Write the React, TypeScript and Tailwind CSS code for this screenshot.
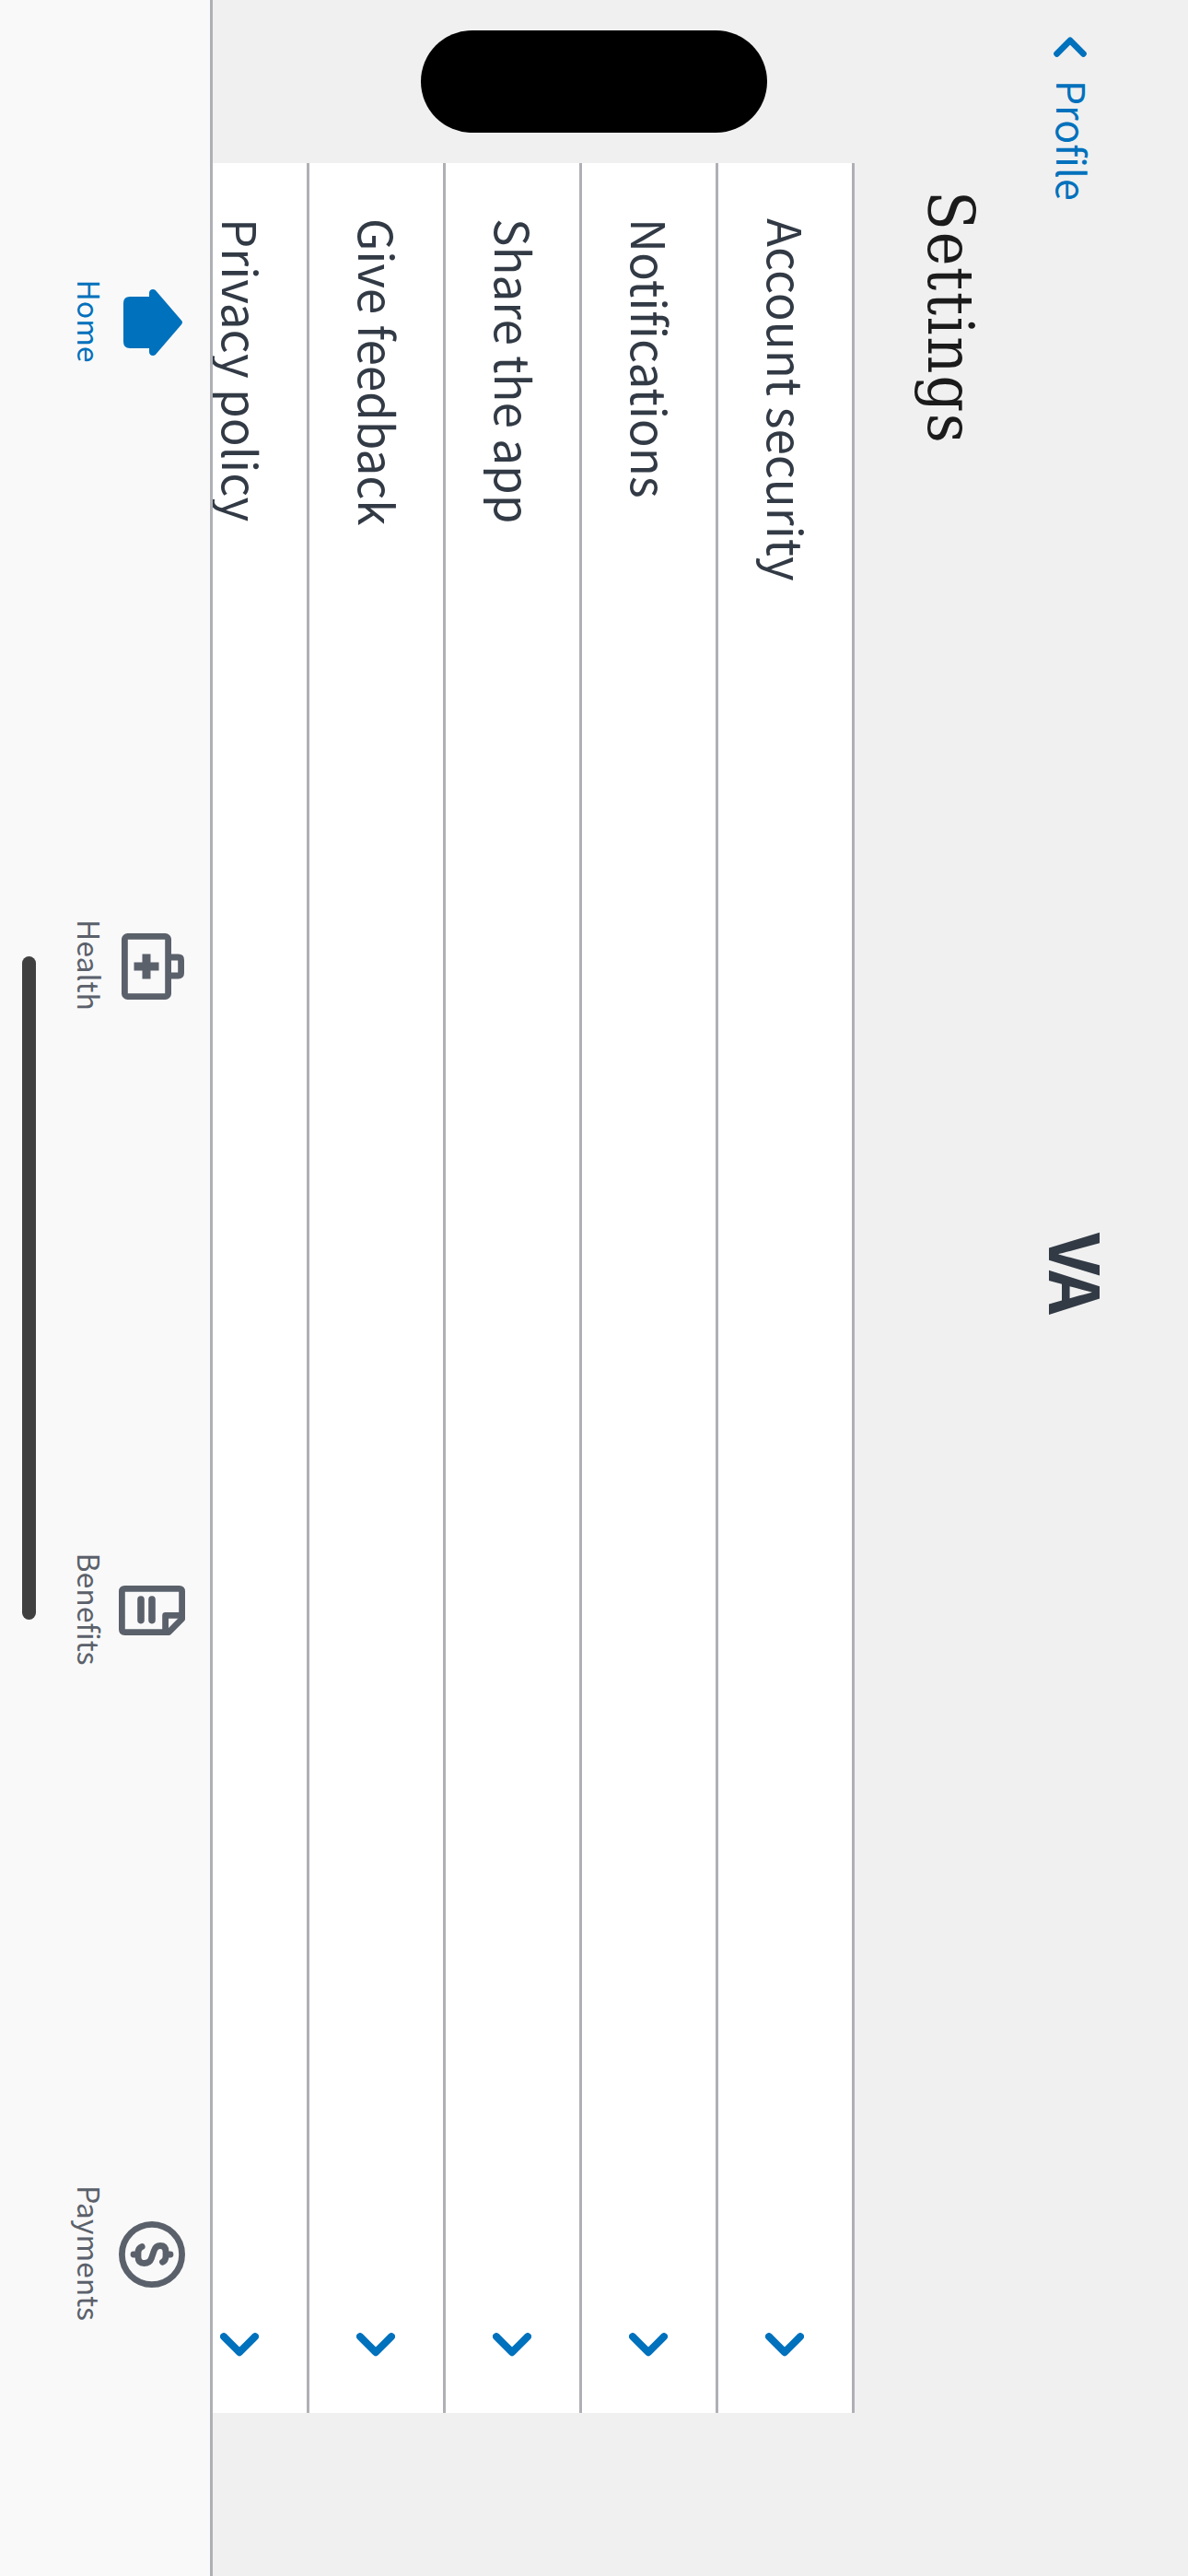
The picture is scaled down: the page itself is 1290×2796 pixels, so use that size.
import type { ReactNode } from "react";

const settings = [
  "Account security",
  "Notifications",
  "Share the app",
  "Give feedback",
  "Privacy policy",
];

const HomeIcon = () => (
  <svg viewBox="0 0 72 72" className="size-[72px]" fill="currentColor">
    <path d="M33.8 4Q36 2 38.2 4L71 32.2C73.2 35 71.5 39 68 39H64V60Q64 67 57 67H15Q8 67 8 60V39H4C.5 39-1.2 35 1 32.2Z" />
  </svg>
);

const HealthIcon = () => (
  <svg viewBox="0 0 72 72" className="size-[72px]" fill="none" stroke="currentColor" strokeWidth="6.8">
    <rect x="3.4" y="18.4" width="65.2" height="47.2" rx="3.2" />
    <path d="M26 17V7.5Q26 4.4 29 4.4H43Q46 4.4 46 7.5V17" />
    <path d="M36 28.5V55.5M22.5 42H49.5" strokeWidth="9" />
  </svg>
);

const BenefitsIcon = () => (
  <svg viewBox="0 0 72 72" className="size-[72px]" fill="none" stroke="currentColor" strokeWidth="6.8">
    <path d="M15.5 3.4H45.2L59.6 17.8V65.5Q59.6 68.6 56.5 68.6H15.5Q12.4 68.6 12.4 65.5V6.5Q12.4 3.4 15.5 3.4Z" strokeLinejoin="round" />
    <path d="M41.4 3V21.4H60" strokeLinejoin="round" />
    <path d="M24 36H46.6M24 48H46.6" strokeWidth="7.6" strokeLinecap="round" />
  </svg>
);

const PaymentsIcon = () => (
  <svg viewBox="0 0 72 72" className="size-[72px]" fill="none" stroke="currentColor" strokeWidth="6.8" strokeLinecap="round">
    <circle cx="36" cy="36" r="32.6" />
    <path d="M36 16V19M36 53V56" />
    <path d="M44.3 24.5Q42.5 21 38 21H33Q26.5 21 26.5 27Q26.5 32 32 33.8L40 36.5Q45.5 38.5 45.5 44.5Q45.5 51 39 51H34Q29 51 27.5 46.8" />
  </svg>
);

const tabs: { label: string; icon: ReactNode; active?: boolean }[] = [
  { label: "Home", icon: <HomeIcon />, active: true },
  { label: "Health", icon: <HealthIcon /> },
  { label: "Benefits", icon: <BenefitsIcon /> },
  { label: "Payments", icon: <PaymentsIcon /> },
];

function Header() {
  return (
    <header className="grid h-[198px] shrink-0 grid-cols-3 items-center pt-[58px]">
      <a className="flex h-[64px] items-center pl-[40px] text-[#0071bc]">
        <svg viewBox="0 0 22 36" className="mt-[-1px] h-[36px] w-[22px]" fill="none" stroke="currentColor" strokeWidth="6.8" strokeLinecap="round" strokeLinejoin="round">
          <path d="M18.3 3.6L3.8 18L18.3 32.4" />
        </svg>
        <span className="mt-[-8px] ml-[25px] text-[42.8px] leading-[64px]">Profile</span>
      </a>
      <div className="mt-[-18px] mr-[35px] text-center text-[74.5px] leading-[80px] font-bold tracking-[-3.7px] text-[#323a45]">VA</div>
    </header>
  );
}

function SettingRow({ label }: { label: string }) {
  return (
    <li className="flex h-[148px] items-center justify-between border-b-[3px] border-[#aeb0b5] bg-white pr-[61px] pl-[60px]">
      <span className="mt-[-5px] text-[51.1px] leading-[72px]">{label}</span>
      <svg viewBox="0 0 26 42" className="h-[42px] w-[26px] text-[#0071bc]" fill="none" stroke="currentColor" strokeWidth="8" strokeLinecap="round" strokeLinejoin="round">
        <path d="M4.2 4L21.2 21L4.2 38" />
      </svg>
    </li>
  );
}

export default function App() {
  return (
    <div className="h-[2796px] w-[1290px] overflow-hidden">
      <div className="relative flex h-[1290px] w-[2796px] origin-top-left translate-x-[1290px] rotate-90 flex-col bg-[#f0f0f0] font-['Noto_Sans_CJK_JP',sans-serif] text-[#323a45]">
        <main className="h-[1059px] overflow-hidden">
          <Header />
          <h1 className="ml-[207px] h-[164px] font-['DejaVu_Serif_Condensed','DejaVu_Serif',serif] text-[69.5px] leading-[120px] tracking-[1.65px] text-[#1b1b1b]">
            Settings
          </h1>
          <ul className="mx-[177px] border-t-[3px] border-[#aeb0b5]">
            {settings.map((label) => (
              <SettingRow key={label} label={label} />
            ))}
          </ul>
        </main>
        <nav className="grid h-[231px] grid-cols-4 border-t-[3px] border-[#aeb0b5] bg-[#f9f9f9]">
          {tabs.map((tab) => (
            <a
              key={tab.label}
              className={`flex flex-col items-center pt-[27px] ${tab.active ? "text-[#0071bc]" : "text-[#5b616b]"}`}
            >
              {tab.icon}
              <span className="mt-[7px] pr-[2px] text-[32px] leading-[48px]">{tab.label}</span>
            </a>
          ))}
        </nav>
        <div className="absolute top-[457px] left-[33px] h-[376px] w-[111px] rounded-full bg-black" />
        <div className="absolute top-[1251px] left-[1038px] h-[15px] w-[720px] rounded-full bg-[#404040]" />
      </div>
    </div>
  );
}
